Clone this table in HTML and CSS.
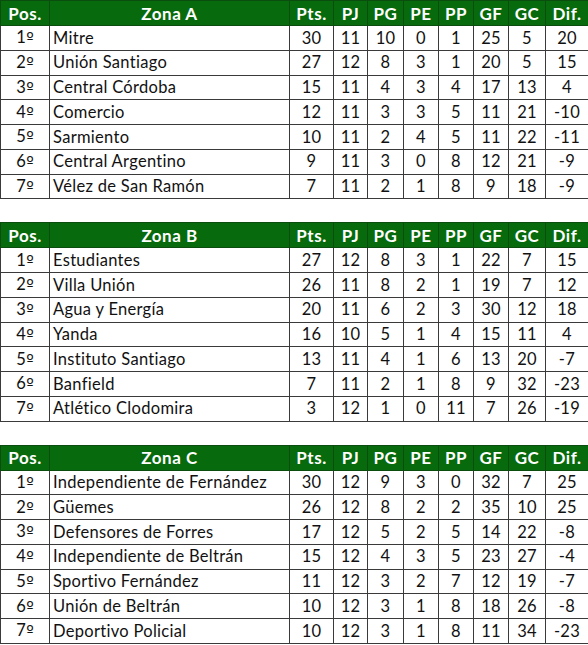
FILE: index.html
```html
<!DOCTYPE html>
<html lang="es">
<head>
<meta charset="utf-8">
<title>Posiciones</title>
<link rel="stylesheet" href="styles.css">
</head>
<body>
<div class="tables">
<table class="standings">
<colgroup><col class="c-pos"><col class="c-team"><col class="c-pts"><col class="c-pj"><col class="c-pg"><col class="c-pe"><col class="c-pp"><col class="c-gf"><col class="c-gc"><col class="c-dif"></colgroup>
<thead><tr><th>Pos.</th><th>Zona A</th><th>Pts.</th><th>PJ</th><th>PG</th><th>PE</th><th>PP</th><th>GF</th><th>GC</th><th>Dif.</th></tr></thead>
<tbody>
<tr><td>1<span class="ord">º</span></td><td class="team">Mitre</td><td>30</td><td>11</td><td>10</td><td>0</td><td>1</td><td>25</td><td>5</td><td>20</td></tr>
<tr><td>2<span class="ord">º</span></td><td class="team">Unión Santiago</td><td>27</td><td>12</td><td>8</td><td>3</td><td>1</td><td>20</td><td>5</td><td>15</td></tr>
<tr><td>3<span class="ord">º</span></td><td class="team">Central Córdoba</td><td>15</td><td>11</td><td>4</td><td>3</td><td>4</td><td>17</td><td>13</td><td>4</td></tr>
<tr><td>4<span class="ord">º</span></td><td class="team">Comercio</td><td>12</td><td>11</td><td>3</td><td>3</td><td>5</td><td>11</td><td>21</td><td>-10</td></tr>
<tr><td>5<span class="ord">º</span></td><td class="team">Sarmiento</td><td>10</td><td>11</td><td>2</td><td>4</td><td>5</td><td>11</td><td>22</td><td>-11</td></tr>
<tr><td>6<span class="ord">º</span></td><td class="team">Central Argentino</td><td>9</td><td>11</td><td>3</td><td>0</td><td>8</td><td>12</td><td>21</td><td>-9</td></tr>
<tr><td>7<span class="ord">º</span></td><td class="team">Vélez de San Ramón</td><td>7</td><td>11</td><td>2</td><td>1</td><td>8</td><td>9</td><td>18</td><td>-9</td></tr>
</tbody>
</table>
<table class="standings">
<colgroup><col class="c-pos"><col class="c-team"><col class="c-pts"><col class="c-pj"><col class="c-pg"><col class="c-pe"><col class="c-pp"><col class="c-gf"><col class="c-gc"><col class="c-dif"></colgroup>
<thead><tr><th>Pos.</th><th>Zona B</th><th>Pts.</th><th>PJ</th><th>PG</th><th>PE</th><th>PP</th><th>GF</th><th>GC</th><th>Dif.</th></tr></thead>
<tbody>
<tr><td>1<span class="ord">º</span></td><td class="team">Estudiantes</td><td>27</td><td>12</td><td>8</td><td>3</td><td>1</td><td>22</td><td>7</td><td>15</td></tr>
<tr><td>2<span class="ord">º</span></td><td class="team">Villa Unión</td><td>26</td><td>11</td><td>8</td><td>2</td><td>1</td><td>19</td><td>7</td><td>12</td></tr>
<tr><td>3<span class="ord">º</span></td><td class="team">Agua y Energía</td><td>20</td><td>11</td><td>6</td><td>2</td><td>3</td><td>30</td><td>12</td><td>18</td></tr>
<tr><td>4<span class="ord">º</span></td><td class="team">Yanda</td><td>16</td><td>10</td><td>5</td><td>1</td><td>4</td><td>15</td><td>11</td><td>4</td></tr>
<tr><td>5<span class="ord">º</span></td><td class="team">Instituto Santiago</td><td>13</td><td>11</td><td>4</td><td>1</td><td>6</td><td>13</td><td>20</td><td>-7</td></tr>
<tr><td>6<span class="ord">º</span></td><td class="team">Banfield</td><td>7</td><td>11</td><td>2</td><td>1</td><td>8</td><td>9</td><td>32</td><td>-23</td></tr>
<tr><td>7<span class="ord">º</span></td><td class="team">Atlético Clodomira</td><td>3</td><td>12</td><td>1</td><td>0</td><td>11</td><td>7</td><td>26</td><td>-19</td></tr>
</tbody>
</table>
<table class="standings">
<colgroup><col class="c-pos"><col class="c-team"><col class="c-pts"><col class="c-pj"><col class="c-pg"><col class="c-pe"><col class="c-pp"><col class="c-gf"><col class="c-gc"><col class="c-dif"></colgroup>
<thead><tr><th>Pos.</th><th>Zona C</th><th>Pts.</th><th>PJ</th><th>PG</th><th>PE</th><th>PP</th><th>GF</th><th>GC</th><th>Dif.</th></tr></thead>
<tbody>
<tr><td>1<span class="ord">º</span></td><td class="team">Independiente de Fernández</td><td>30</td><td>12</td><td>9</td><td>3</td><td>0</td><td>32</td><td>7</td><td>25</td></tr>
<tr><td>2<span class="ord">º</span></td><td class="team">Güemes</td><td>26</td><td>12</td><td>8</td><td>2</td><td>2</td><td>35</td><td>10</td><td>25</td></tr>
<tr><td>3<span class="ord">º</span></td><td class="team">Defensores de Forres</td><td>17</td><td>12</td><td>5</td><td>2</td><td>5</td><td>14</td><td>22</td><td>-8</td></tr>
<tr><td>4<span class="ord">º</span></td><td class="team">Independiente de Beltrán</td><td>15</td><td>12</td><td>4</td><td>3</td><td>5</td><td>23</td><td>27</td><td>-4</td></tr>
<tr><td>5<span class="ord">º</span></td><td class="team">Sportivo Fernández</td><td>11</td><td>12</td><td>3</td><td>2</td><td>7</td><td>12</td><td>19</td><td>-7</td></tr>
<tr><td>6<span class="ord">º</span></td><td class="team">Unión de Beltrán</td><td>10</td><td>12</td><td>3</td><td>1</td><td>8</td><td>18</td><td>26</td><td>-8</td></tr>
<tr><td>7<span class="ord">º</span></td><td class="team">Deportivo Policial</td><td>10</td><td>12</td><td>3</td><td>1</td><td>8</td><td>11</td><td>34</td><td>-23</td></tr>
</tbody>
</table>
</div>
</body>
</html>
```
FILE: styles.css
```css
html, body {
  margin: 0;
  padding: 0;
  background: #ffffff;
}
.tables {
  display: flex;
  flex-direction: column;
  gap: 23px;
  width: 588px;
}
.standings {
  width: 588px;
  table-layout: fixed;
  border-collapse: collapse;
  font-family: Lato, "Liberation Sans", sans-serif;
  font-size: 16.5px;
  letter-spacing: 0.3px;
  color: #111111;
}
.c-pos { width: 49px; }
.c-team { width: 240px; }
.c-pts { width: 44px; }
.c-pj { width: 34px; }
.c-pg { width: 36px; }
.c-pe { width: 35px; }
.c-pp { width: 35px; }
.c-gf { width: 35px; }
.c-gc { width: 37px; }
.c-dif { width: 43px; }
.standings th {
  background: #076a0c;
  color: #ffffff;
  font-weight: 700;
  height: 24px;
  padding: 0;
  text-align: center;
  border: 1px solid #0b4d0e;
  line-height: 1;
  letter-spacing: 0.5px;
  font-size: 17px;
}
.standings td {
  height: 23.75px;
  padding: 0;
  text-align: center;
  border: 1px solid #3a3a3a;
  line-height: 1;
}
.standings td.team {
  text-align: left;
  padding-left: 3px;
}
.ord {
  font-family: "DejaVu Sans", sans-serif;
  font-size: 16px;
  letter-spacing: 0;
}
```
